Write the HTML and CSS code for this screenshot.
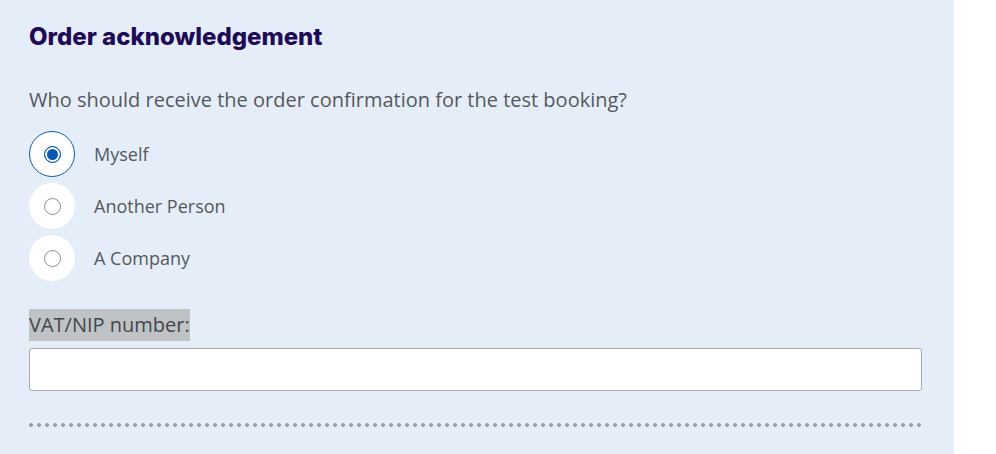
FILE: index.html
```html
<!DOCTYPE html>
<html lang="en">
<head>
    <meta charset="UTF-8">
    <title>Order acknowledgement</title>
    <link rel="stylesheet" href="styles.css">
</head>
<body>
    <div class="page">
        <div class="panel">
            <h2 class="panel-title">Order acknowledgement</h2>
            <p class="question">Who should receive the order confirmation for the test booking?</p>

            <div class="radio-group">
                <label class="radio-row">
                    <span class="radio-ring selected"><input type="radio" name="recipient" checked></span>
                    <span class="radio-label">Myself</span>
                </label>
                <label class="radio-row">
                    <span class="radio-ring"><input type="radio" name="recipient"></span>
                    <span class="radio-label">Another Person</span>
                </label>
                <label class="radio-row">
                    <span class="radio-ring"><input type="radio" name="recipient"></span>
                    <span class="radio-label">A Company</span>
                </label>
            </div>

            <div class="field">
                <label class="field-label" for="vat">VAT/NIP number:</label>
                <input type="text" id="vat" class="field-input">
            </div>

            <div class="dots"></div>
        </div>
        <div class="side"></div>
    </div>
</body>
</html>
```

FILE: styles.css
```css
body {
    margin: 0;
    font-family: 'Open Sans', 'Liberation Sans', sans-serif;
    background: #ffffff;
}

.page {
    display: flex;
    height: 454px;
    overflow: hidden;
}

.panel {
    width: 954px;
    box-sizing: border-box;
    background: #e5eef8;
    padding: 21px 32px 0 29px;
}

.side {
    flex: 1;
    background: #ffffff;
}

.panel-title {
    margin: 0;
    font-family: 'Inter', 'Liberation Sans', sans-serif;
    font-weight: 800;
    font-size: 24px;
    line-height: 32px;
    color: #1e0b57;
}

.question {
    margin: 33px 0 17px 0;
    font-size: 20px;
    line-height: 28px;
    color: #55585c;
}

.radio-group {
    display: flex;
    flex-direction: column;
    gap: 6px;
}

.radio-row {
    display: flex;
    align-items: center;
    gap: 19px;
    height: 46px;
    cursor: pointer;
}

.radio-ring {
    width: 46px;
    height: 46px;
    flex-shrink: 0;
    box-sizing: border-box;
    border-radius: 50%;
    background: #ffffff;
    display: flex;
    align-items: center;
    justify-content: center;
}

.radio-ring.selected {
    border: 1px solid #0d5bab;
}

.radio-ring input {
    appearance: none;
    margin: 0;
    width: 17px;
    height: 17px;
    border-radius: 50%;
    border: 1px solid #8f8f8f;
    background: #ffffff;
    box-sizing: border-box;
}

.radio-ring input:checked {
    border: 1.5px solid #0a58b0;
    background: #0a58b0;
    box-shadow: inset 0 0 0 2px #ffffff;
}

.radio-label {
    font-size: 18px;
    color: #55585c;
}

.field {
    margin-top: 28px;
}

.field-label {
    display: inline-block;
    background: #c0c3c6;
    font-size: 20px;
    line-height: 32px;
    color: #44474b;
}

.field-input {
    display: block;
    width: 100%;
    height: 43px;
    margin-top: 7px;
    box-sizing: border-box;
    border: 1px solid #a9abae;
    border-radius: 3px;
    background: #ffffff;
    font-family: inherit;
    font-size: 16px;
    padding: 0 10px;
}

.dots {
    margin-top: 32px;
    height: 4px;
    background-image: radial-gradient(circle, #98a0aa 1.7px, transparent 2.1px);
    background-size: 8px 4px;
    background-position: -2px 0;
    background-repeat: repeat-x;
}
```
